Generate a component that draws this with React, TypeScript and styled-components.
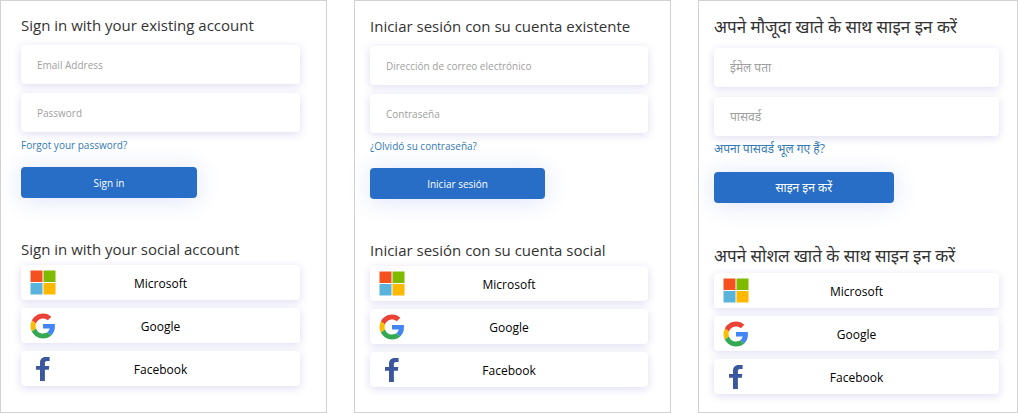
import React from 'react';
import styled, { createGlobalStyle } from 'styled-components';

const GlobalStyle = createGlobalStyle`
  * { box-sizing: border-box; }
  body {
    margin: 0;
    background: #fff;
    font-family: 'Segoe UI', 'Open Sans', 'Noto Sans', 'Noto Sans Devanagari', sans-serif;
  }
`;

const Page = styled.main`
  display: grid;
  grid-template-columns: 327fr 317fr 320fr;
  gap: 27px;
  min-height: 100vh;
`;

const Panel = styled.section<{ $padding: string }>`
  border: 1px solid #d2d2d2;
  padding: ${(p) => p.$padding};
  min-width: 0;
`;

const Heading = styled.h2<{ $tall?: boolean }>`
  margin: 0;
  font-size: ${(p) => (p.$tall ? 17 : 15)}px;
  line-height: ${(p) => (p.$tall ? 25 : 22)}px;
  font-weight: 400;
  color: #333;
  white-space: nowrap;
`;

const Form = styled.form`
  display: flex;
  flex-direction: column;
  align-items: flex-start;
  margin: 9px 0 40px;
`;

const Fields = styled.div<{ $tall?: boolean }>`
  display: grid;
  gap: ${(p) => (p.$tall ? 10 : 9)}px;
  width: 100%;
`;

const Field = styled.input<{ $tall?: boolean }>`
  width: 100%;
  height: 39px;
  padding: 0 16px;
  border: 0;
  border-radius: 4px;
  background: #fff;
  box-shadow: 0 2px 8px rgba(70, 60, 180, 0.18);
  font-family: inherit;
  font-size: ${(p) => (p.$tall ? 12 : 10)}px;
  color: #333;
  &::placeholder { color: #a0a0a0; opacity: 1; }
`;

const ForgotLink = styled.a<{ $tall?: boolean }>`
  margin: 4px 0 ${(p) => (p.$tall ? 14 : 13)}px;
  font-size: ${(p) => (p.$tall ? 12 : 10)}px;
  line-height: 18px;
  color: #337ab7;
  text-decoration: none;
`;

const SubmitButton = styled.button<{ $tall?: boolean }>`
  width: 63%;
  height: 31px;
  padding: 0;
  border: 0;
  border-radius: 4px;
  background: #286ec6;
  box-shadow: 0 2px 24px rgba(50, 90, 220, 0.16);
  color: #fff;
  font-family: inherit;
  font-size: ${(p) => (p.$tall ? 12 : 10)}px;
`;

const Providers = styled.div`
  display: grid;
  gap: 8px;
  margin-top: 5px;
`;

const ProviderButton = styled.button`
  display: grid;
  grid-template-columns: 26px 1fr 26px;
  align-items: center;
  height: 35px;
  padding: 0 9px;
  border: 0;
  border-radius: 4px;
  background: #fff;
  box-shadow: 0 2px 8px rgba(70, 60, 180, 0.18);
  color: #000;
  font-family: inherit;
  font-size: 12px;
  text-align: center;
  svg { display: block; }
`;

const ProviderName = styled.span`
  padding-top: 2px;
`;

const MicrosoftLogo = () => (
  <svg width="26" height="25" viewBox="0 0 26 25" aria-hidden="true">
    <rect x="0.5" y="0.5" width="12" height="11.5" fill="#f4511e" />
    <rect x="13.5" y="0.5" width="12" height="11.5" fill="#7fba00" />
    <rect x="0.5" y="13" width="12" height="11.5" fill="#5ab3da" />
    <rect x="13.5" y="13" width="12" height="11.5" fill="#ffb900" />
  </svg>
);

const GoogleLogo = () => (
  <svg width="26" height="26" viewBox="-1 -1 50 50" aria-hidden="true">
    <path fill="#ea4335" d="M24 9.5c3.54 0 6.71 1.22 9.21 3.6l6.85-6.85C35.9 2.38 30.47 0 24 0 14.62 0 6.51 5.38 2.56 13.22l7.98 6.19C12.43 13.72 17.74 9.5 24 9.5z" />
    <path fill="#4285f4" d="M46.98 24.55c0-1.57-.15-3.09-.38-4.55H24v9.02h12.94c-.58 2.96-2.26 5.48-4.78 7.18l7.73 6c4.51-4.18 7.09-10.36 7.09-17.65z" />
    <path fill="#fbbc05" d="M10.53 28.59c-.48-1.45-.76-2.99-.76-4.59s.27-3.14.76-4.59l-7.98-6.19C.92 16.46 0 20.12 0 24c0 3.88.92 7.54 2.56 10.78l7.97-6.19z" />
    <path fill="#34a853" d="M24 48c6.48 0 11.93-2.13 15.89-5.81l-7.73-6c-2.15 1.45-4.92 2.3-8.16 2.3-6.26 0-11.57-4.22-13.47-9.91l-7.98 6.19C6.51 42.62 14.62 48 24 48z" />
  </svg>
);

const FacebookLogo = () => (
  <svg width="26" height="26" viewBox="0 0 26 26" aria-hidden="true">
    <path fill="#3b579d" d="M10 25V13.7H6V9.9h4V6.8C10 3.2 12.2 1 15.4 1H19.6v4h-2.4c-1.7 0-2.3.8-2.3 2.2v2.7h4.4l-.5 3.8h-3.9V25z" />
  </svg>
);

const providers = [
  { name: 'Microsoft', Logo: MicrosoftLogo },
  { name: 'Google', Logo: GoogleLogo },
  { name: 'Facebook', Logo: FacebookLogo },
];

type Locale = {
  lang: string;
  padding: string;
  tall?: boolean;
  existing: string;
  email: string;
  password: string;
  forgot: string;
  submit: string;
  social: string;
};

const locales: Locale[] = [
  {
    lang: 'en',
    padding: '13px 26px 26px 20px',
    existing: 'Sign in with your existing account',
    email: 'Email Address',
    password: 'Password',
    forgot: 'Forgot your password?',
    submit: 'Sign in',
    social: 'Sign in with your social account',
  },
  {
    lang: 'es',
    padding: '14px 22px 25px 15px',
    existing: 'Iniciar sesión con su cuenta existente',
    email: 'Dirección de correo electrónico',
    password: 'Contraseña',
    forgot: '¿Olvidó su contraseña?',
    submit: 'Iniciar sesión',
    social: 'Iniciar sesión con su cuenta social',
  },
  {
    lang: 'hi',
    padding: '13px 18px 17px 15px',
    tall: true,
    existing: 'अपने मौजूदा खाते के साथ साइन इन करें',
    email: 'ईमेल पता',
    password: 'पासवर्ड',
    forgot: 'अपना पासवर्ड भूल गए हैं?',
    submit: 'साइन इन करें',
    social: 'अपने सोशल खाते के साथ साइन इन करें',
  },
];

const SignInPanel = ({ locale }: { locale: Locale }) => {
  const { tall } = locale;
  return (
    <Panel lang={locale.lang} $padding={locale.padding}>
      <Heading $tall={tall}>{locale.existing}</Heading>
      <Form onSubmit={(e) => e.preventDefault()}>
        <Fields $tall={tall}>
          <Field $tall={tall} type="email" placeholder={locale.email} aria-label={locale.email} />
          <Field $tall={tall} type="password" placeholder={locale.password} aria-label={locale.password} />
        </Fields>
        <ForgotLink $tall={tall} href="#forgot">{locale.forgot}</ForgotLink>
        <SubmitButton $tall={tall} type="submit">{locale.submit}</SubmitButton>
      </Form>
      <Heading $tall={tall}>{locale.social}</Heading>
      <Providers>
        {providers.map(({ name, Logo }) => (
          <ProviderButton key={name} type="button">
            <Logo />
            <ProviderName>{name}</ProviderName>
          </ProviderButton>
        ))}
      </Providers>
    </Panel>
  );
};

export default function App() {
  return (
    <>
      <GlobalStyle />
      <Page>
        {locales.map((locale) => (
          <SignInPanel key={locale.lang} locale={locale} />
        ))}
      </Page>
    </>
  );
}
